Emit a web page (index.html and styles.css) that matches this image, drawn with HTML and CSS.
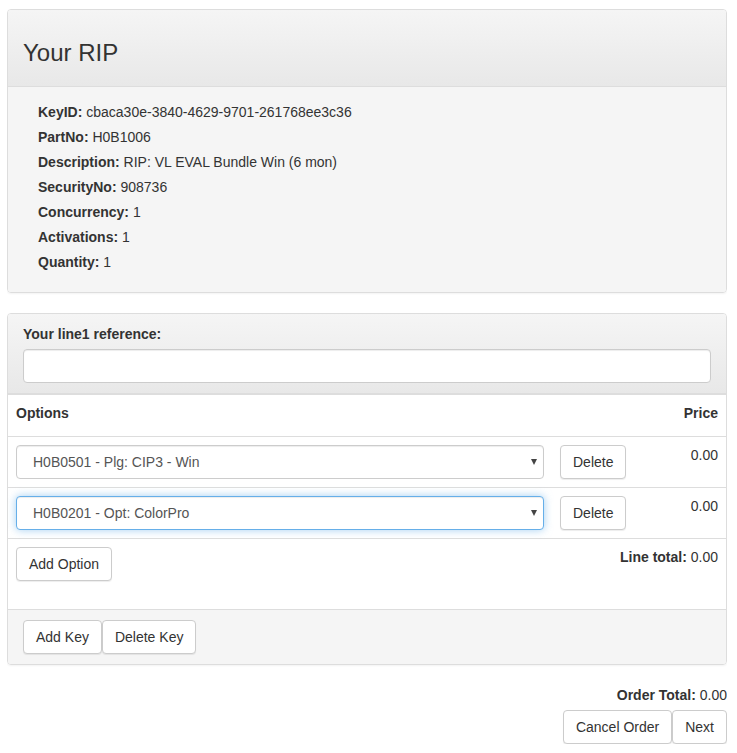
FILE: index.html
```
<!doctype html>
<html lang="en">
  <head>
    <meta charset="utf-8">
    <title>Your RIP</title>
    <link rel="stylesheet" href="styles.css">
  </head>
  <body>
    <div class="panel">
      <div class="panel-heading">
        <h3>Your RIP</h3>
      </div>
      <div class="panel-body">
        <div class="key-row"><b>KeyID:</b> cbaca30e-3840-4629-9701-261768ee3c36</div>
        <div class="key-row"><b>PartNo:</b> H0B1006</div>
        <div class="key-row"><b>Description:</b> RIP: VL EVAL Bundle Win (6 mon)</div>
        <div class="key-row"><b>SecurityNo:</b> 908736</div>
        <div class="key-row"><b>Concurrency:</b> 1</div>
        <div class="key-row"><b>Activations:</b> 1</div>
        <div class="key-row"><b>Quantity:</b> 1</div>
      </div>
    </div>

    <div class="panel">
      <div class="panel-heading">
        <label for="line-ref">Your line1 reference:</label>
        <input id="line-ref" class="form-control" type="text">
      </div>
      <div class="options">
        <div class="row head">
          <b>Options</b>
          <b class="price">Price</b>
        </div>
        <div class="row">
          <div class="select">
            <select class="form-control">
              <option>H0B0501 - Plg: CIP3 - Win</option>
            </select>
            <svg class="arrow" width="6" height="6" viewBox="0 0 6 6"><path d="M0 0h6L3 6z"/></svg>
          </div>
          <button class="btn">Delete</button>
          <span class="price">0.00</span>
        </div>
        <div class="row">
          <div class="select">
            <select class="form-control active">
              <option>H0B0201 - Opt: ColorPro</option>
            </select>
            <svg class="arrow" width="6" height="6" viewBox="0 0 6 6"><path d="M0 0h6L3 6z"/></svg>
          </div>
          <button class="btn">Delete</button>
          <span class="price">0.00</span>
        </div>
        <div class="row last">
          <button class="btn">Add Option</button>
          <span class="price"><b>Line total:</b> 0.00</span>
        </div>
      </div>
      <div class="panel-footer">
        <button class="btn">Add Key</button>
        <button class="btn">Delete Key</button>
      </div>
    </div>

    <div class="order-total"><b>Order Total:</b> 0.00</div>
    <div class="order-buttons">
      <button class="btn">Cancel Order</button>
      <button class="btn">Next</button>
    </div>
  </body>
</html>
```

FILE: styles.css
```
* {
  box-sizing: border-box;
}

body {
  margin: 9px 10px 0 7px;
  font-family: "Liberation Sans", Arial, sans-serif;
  font-size: 14px;
  line-height: 20px;
  color: #333;
  background-color: #fff;
}

.panel {
  margin-bottom: 20px;
  border: 1px solid #ddd;
  border-radius: 4px;
  box-shadow: 0 1px 2px rgba(0,0,0,.05);
}

.panel-heading {
  padding: 10px 15px;
  border-bottom: 1px solid #ddd;
  border-radius: 3px 3px 0 0;
  background-image: linear-gradient(to bottom, #f5f5f5 0%, #e8e8e8 100%);
}

.panel-heading h3 {
  margin: 20px 0 10px;
  font-size: 24px;
  font-weight: normal;
  line-height: 26px;
}

.panel-heading label {
  display: block;
  margin-bottom: 5px;
  font-weight: bold;
}

.panel-body {
  padding: 15px 30px;
  border-radius: 0 0 3px 3px;
  background-color: #f5f5f5;
}

.key-row {
  margin-bottom: 5px;
}

.form-control {
  display: block;
  width: 100%;
  height: 34px;
  padding: 6px 12px;
  font-family: inherit;
  font-size: 14px;
  line-height: 20px;
  color: #555;
  background-color: #fff;
  border: 1px solid #ccc;
  border-radius: 4px;
  outline: none;
  box-shadow: inset 0 1px 1px rgba(0,0,0,.075);
}

.form-control.active {
  border-color: #66afe9;
  box-shadow: inset 0 1px 1px rgba(0,0,0,.075), 0 0 8px rgba(102,175,233,.6);
}

.select {
  position: relative;
  width: 528px;
  margin-right: 16px;
}

.select select {
  appearance: none;
  padding-left: 16px;
}

.arrow {
  position: absolute;
  right: 7px;
  top: 14px;
  fill: #444;
}

.row {
  display: flex;
  align-items: flex-start;
  padding: 8px;
  border-top: 1px solid #ddd;
}

.row.head {
  padding-bottom: 13px;
}

.row.last {
  padding-bottom: 28px;
}

.price {
  margin-left: auto;
}

.btn {
  height: 34px;
  padding: 6px 12px;
  font-family: inherit;
  font-size: 14px;
  line-height: 20px;
  color: #333;
  background-color: #fff;
  border: 1px solid #ccc;
  border-radius: 4px;
  box-shadow: 0 1px 1px rgba(0,0,0,.075);
}

.panel-footer {
  display: flex;
  padding: 10px 15px;
  border-top: 1px solid #ddd;
  border-radius: 0 0 3px 3px;
  background-color: #f5f5f5;
}

.order-total {
  margin-bottom: 5px;
  text-align: right;
}

.order-buttons {
  display: flex;
  justify-content: flex-end;
}
```
